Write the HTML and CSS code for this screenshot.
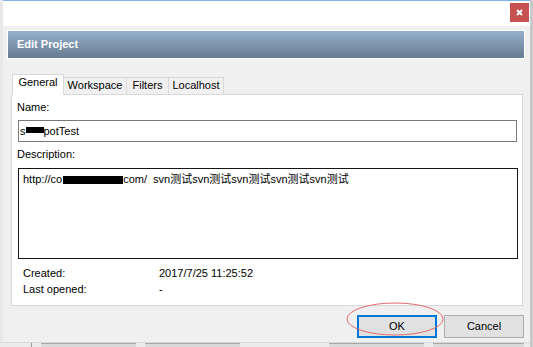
FILE: index.html
```html
<!DOCTYPE html>
<html>
<head>
<meta charset="utf-8">
<link rel="stylesheet" href="styles.css">
</head>
<body>
<div class="desktop">
  <div class="dialog">
    <div class="titlebar">
      <div class="close"><svg width="19" height="19" viewBox="0 0 19 19"><path d="M7 7 L12 12 M12 7 L7 12" stroke="#fff" stroke-width="2" fill="none"/></svg></div>
    </div>
    <div class="dlg-body">
      <div class="header">Edit Project</div>
      <div class="tabs">
        <div class="tab active t1">General</div>
        <div class="tab t2">Workspace</div>
        <div class="tab t3">Filters</div>
        <div class="tab t4">Localhost</div>
      </div>
      <div class="panel">
        <div class="label">Name:</div>
        <div class="input">s<span class="redact r1"></span>potTest</div>
        <div class="label desc-label">Description:</div>
        <div class="textarea">http://co<span class="redact r2"></span>com/&nbsp; svn测试svn测试svn测试svn测试svn测试</div>
        <div class="info">
          <span>Created:</span><span>2017/7/25 11:25:52</span>
          <span>Last opened:</span><span>-</span>
        </div>
      </div>
      <div class="buttons">
        <div class="btn ok">OK</div>
        <div class="btn">Cancel</div>
      </div>
    </div>
  </div>
  <div class="under">
    <div class="seg s0"></div>
    <div class="seg s1"></div>
    <div class="seg s2"></div>
    <div class="seg s3"></div>
    <div class="seg s4"></div>
  </div>
  <svg class="annot" width="98" height="34" viewBox="0 0 98 34"><ellipse cx="49" cy="17" rx="48" ry="16" fill="none" stroke="#e46a6a" stroke-width="1"/></svg>
</div>
</body>
</html>
```

FILE: styles.css
```css
html, body {
  margin: 0;
  padding: 0;
  background: #e8e8e8;
}
.desktop {
  position: relative;
  width: 530px;
  height: 347px;
  border-right: 3px solid #c9c9c9;
  background: #e8e8e8;
  overflow: hidden;
  font-family: "Liberation Sans", Arial, "Noto Sans CJK SC", sans-serif;
  font-size: 11px;
  color: #000;
}
.dialog {
  margin-left: 3px;
  width: 527px;
  height: 342px;
  display: flex;
  flex-direction: column;
}
.titlebar {
  height: 25px;
  border-top: 1px solid #7db6ec;
  background: #fff;
  display: flex;
  justify-content: flex-end;
  align-items: flex-start;
}
.close {
  width: 19px;
  height: 19px;
  margin-top: 2px;
  margin-right: 1px;
  background: #c75050;
}
.close svg { display: block; }
.dlg-body {
  flex: 1;
  background: #f0f0f0;
  padding: 0 7px 0 8px;
  display: flex;
  flex-direction: column;
}
.header {
  margin: 4px 0 0 -4px;
  width: 518px;
  height: 29px;
  box-sizing: border-box;
  border: 1px solid #fff;
  background: linear-gradient(#95b0cc, #677b90);
  color: #fff;
  font-weight: bold;
  font-size: 11px;
  line-height: 27px;
  padding-left: 9px;
}
.tabs {
  margin-top: 15px;
  height: 20px;
  display: flex;
  align-items: flex-end;
  padding-left: 1px;
  position: relative;
  z-index: 1;
}
.tab {
  box-sizing: border-box;
  height: 17px;
  border: 1px solid #d9d9d9;
  border-bottom: none;
  background: #f0f0f0;
  text-align: center;
  line-height: 15px;
  margin-left: -1px;
}
.tab.active {
  height: 21px;
  margin-bottom: -1px;
  background: #fff;
  line-height: 15px;
  margin-left: 0;
}
.t1 { width: 52px; }
.t2 { width: 64px; }
.t3 { width: 43px; }
.t4 { width: 56px; }
.panel {
  box-sizing: border-box;
  width: 512px;
  height: 212px;
  border: 1px solid #d9d9d9;
  background: #fff;
  padding: 6px 5px 0 5px;
}
.label {
  line-height: 13px;
  height: 13px;
}
.input {
  box-sizing: border-box;
  margin: 6px 0 0 1px;
  width: 499px;
  height: 22px;
  border: 1px solid #7a7a7a;
  padding-left: 1px;
  line-height: 20px;
  white-space: nowrap;
}
.redact {
  display: inline-block;
  background: #000;
  vertical-align: baseline;
}
.r1 { width: 18px; height: 6px; margin-bottom: 2px; }
.r2 { width: 60px; height: 8px; margin-left: 1px; margin-bottom: -1px; }
.desc-label { margin-top: 6px; }
.textarea {
  box-sizing: border-box;
  margin: 7px 0 0 1px;
  width: 500px;
  height: 91px;
  border: 1px solid #151515;
  padding: 4px 4px 0 4px;
  line-height: 13px;
  white-space: nowrap;
}
.info {
  margin-top: 8px;
  padding-left: 6px;
  display: grid;
  grid-template-columns: 136px 1fr;
  row-gap: 3px;
  line-height: 13px;
}
.buttons {
  margin-top: 9px;
  margin-right: -1px;
  display: flex;
  justify-content: flex-end;
  gap: 7px;
}
.btn {
  box-sizing: border-box;
  width: 80px;
  height: 23px;
  background: #e1e1e1;
  border: 1px solid #adadad;
  text-align: center;
  line-height: 21px;
}
.btn.ok {
  border: 2px solid #0078d7;
  line-height: 19px;
}
.under {
  height: 4px;
  border-top: 1px solid #d9d9d9;
  display: flex;
  background: #ececec;
}
.seg {
  height: 3px;
  border-top: 1px solid #a9a9a9;
  background: #dadada;
}
.s0 { width: 0; height: 4px; border-top: none; border-left: 1px solid #9a9a9a; margin-left: 31px; background: none; }
.s1 { margin-left: 9px; width: 95px; }
.s2 { margin-left: 9px; width: 95px; }
.s3 { margin-left: 89px; width: 95px; }
.s4 { margin-left: 9px; width: 91px; }
.annot {
  position: absolute;
  left: 346px;
  top: 302px;
}
```
